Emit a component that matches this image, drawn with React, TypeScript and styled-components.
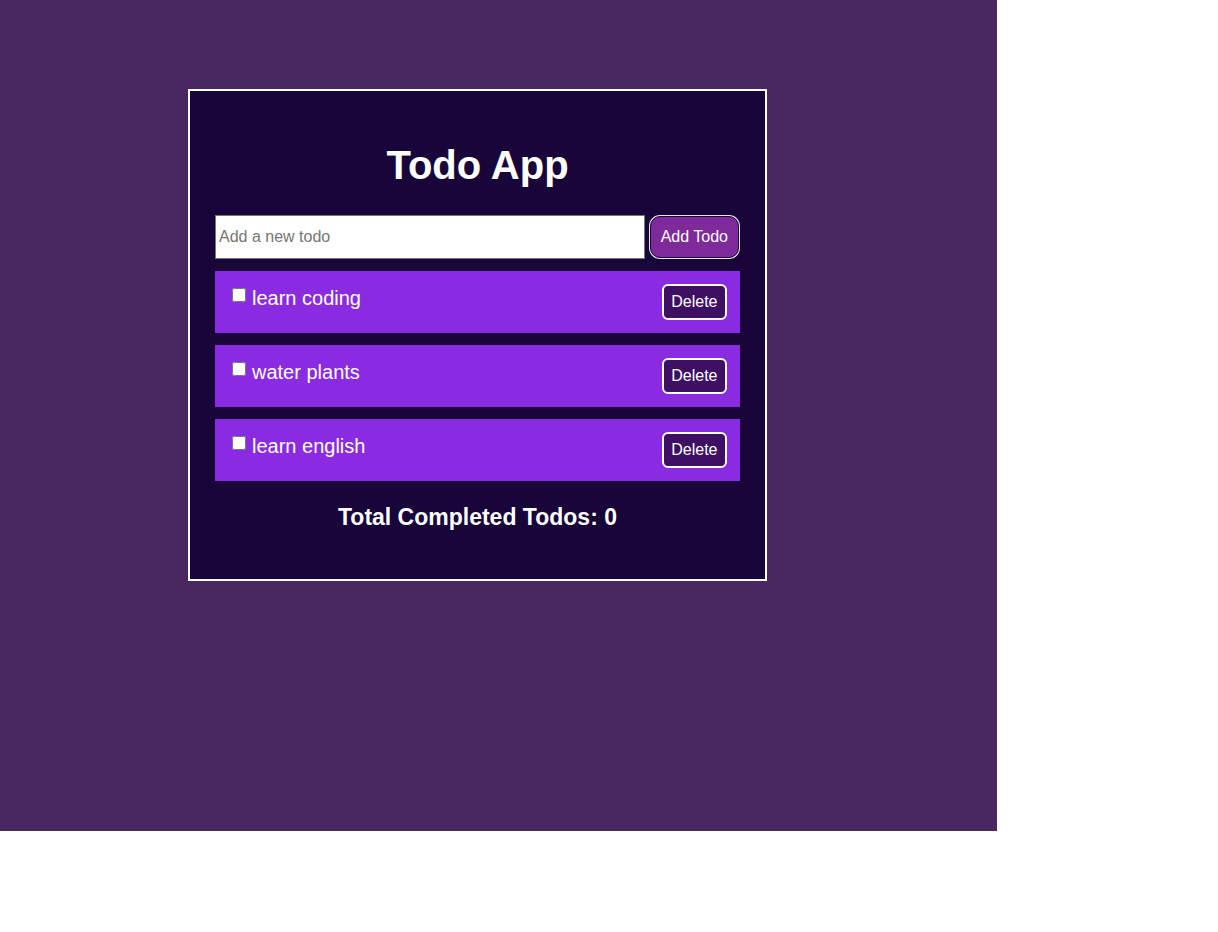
import styled, { createGlobalStyle } from "styled-components";

const GlobalStyle = createGlobalStyle`
  body {
    margin: 0;
    background: #ffffff;
    font-family: "Liberation Sans", Arial, sans-serif;
  }
`;

const Page = styled.div`
  width: 997px;
  height: 831px;
  box-sizing: border-box;
  padding: 89px 0 0 188px;
  background-color: #4a2662;
`;

const Card = styled.div`
  width: 579px;
  box-sizing: border-box;
  border: 2px solid #ffffff;
  background-color: #18053a;
  padding: 25px 25px 25px;
  color: #ffffff;
`;

const Title = styled.h1`
  text-align: center;
  font-size: 40px;
  font-weight: 700;
  margin: 27px 0 27px;
`;

const Form = styled.form`
  display: flex;
  align-items: center;
  gap: 5px;
  margin-bottom: 12px;
`;

const Input = styled.input`
  flex: 1;
  height: 44px;
  box-sizing: border-box;
  border: 1px solid #767676;
  padding: 0 3px;
  font-family: inherit;
  font-size: 16px;
  &::placeholder {
    color: #757575;
  }
`;

const AddBtn = styled.button`
  height: 42px;
  padding: 0 10px;
  border: 1px solid #180538;
  box-shadow: 0 0 0 1px #e8e8e8;
  border-radius: 10px;
  background-color: #7e2a9a;
  color: #ffffff;
  font-family: inherit;
  font-size: 16px;
  margin-right: 1px;
`;

const List = styled.ul`
  list-style: none;
  margin: 0;
  padding: 0;
  display: flex;
  flex-direction: column;
  gap: 12px;
`;

const Item = styled.li`
  display: flex;
  justify-content: space-between;
  align-items: flex-start;
  padding: 13px;
  background-color: #8a2be2;
`;

const Label = styled.label`
  display: flex;
  align-items: flex-start;
  margin-top: 3px;
  font-size: 20px;
  line-height: 23px;
  input {
    margin: 1px 6px 0 4px;
    width: 14px;
    height: 14px;
  }
`;

const DelBtn = styled.button`
  height: 36px;
  padding: 0 7.5px;
  border: 2px solid #ffffff;
  border-radius: 6px;
  background-color: #3d1064;
  color: #ffffff;
  font-family: inherit;
  font-size: 16px;
`;

const Total = styled.h3`
  text-align: center;
  font-size: 23px;
  font-weight: 700;
  margin: 23px 0 23px;
`;

const todos = [
  { id: 1, text: "learn coding" },
  { id: 2, text: "water plants" },
  { id: 3, text: "learn english" },
];

function App() {
  return (
    <Page>
      <GlobalStyle />
      <Card>
        <Title>Todo App</Title>
        <Form onSubmit={(e) => e.preventDefault()}>
          <Input type="text" placeholder="Add a new todo" />
          <AddBtn type="submit">Add Todo</AddBtn>
        </Form>
        <List>
          {todos.map((todo) => (
            <Item key={todo.id}>
              <Label>
                <input type="checkbox" />
                {todo.text}
              </Label>
              <DelBtn>Delete</DelBtn>
            </Item>
          ))}
        </List>
        <Total>Total Completed Todos: 0</Total>
      </Card>
    </Page>
  );
}

export default App;
